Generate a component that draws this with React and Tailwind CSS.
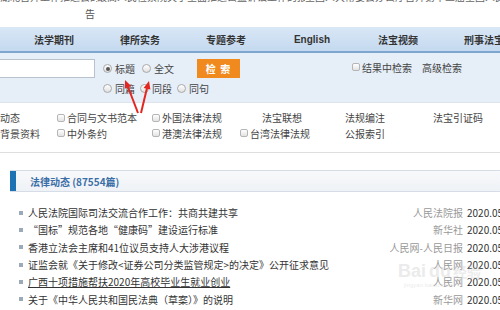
import React from "react";

const CB = () => (
  <span className="inline-block w-[8px] h-[8px] mr-[2px] rounded-[2px] border border-[#b5b5b5] bg-gradient-to-b from-white to-[#e3e3e3] shrink-0" />
);

const Radio = ({ checked }) => (
  <span className="inline-flex items-center justify-center w-[9px] h-[9px] mr-[3px] rounded-full border border-[#a9a9a9] bg-gradient-to-b from-white to-[#e0e0e0] shrink-0">
    {checked && <span className="w-[4px] h-[4px] rounded-full bg-[#555]" />}
  </span>
);

const items = [
  ["人民法院国际司法交流合作工作：共商共建共享", "人民法院报", false],
  ["“国标”规范各地“健康码”建设运行标准", "新华社", false],
  ["香港立法会主席和41位议员支持人大涉港议程", "人民网-人民日报", false],
  ["证监会就《关于修改<证券公司分类监管规定>的决定》公开征求意见", "人民网", false],
  ["广西十项措施帮扶2020年高校毕业生就业创业", "人民网", true],
  ["关于《中华人民共和国民法典（草案）》的说明", "新华网", false],
];

export default function App() {
  return (
    <div className="relative w-[500px] h-[310px] overflow-hidden bg-white text-[#333] font-['Noto_Sans_CJK_SC','Noto_Sans',sans-serif]">
      {/* top strip */}
      <div className="h-[27px] overflow-hidden text-[10px] leading-[13px] text-[#666]">
        <div className="flex -mt-[10px] whitespace-nowrap">
          <span className="w-[97px] shrink-0 overflow-hidden">湖北召开工作推进会的报</span>
          <span className="w-[208px] shrink-0 overflow-hidden">最高人民检察院关于全面推进公益诉讼工作的报告</span>
          <span className="shrink-0">全国人大常委会办公厅召开第十三届全国人民代表大会</span>
        </div>
        <div className="pl-[85px] mt-[4px] text-[#555]">告</div>
      </div>

      {/* nav */}
      <div className="h-[26px] flex items-center pl-[11px] bg-gradient-to-b from-[#d9e7f6] to-[#c4d9ef] border-b-2 border-[#7ea5cd] whitespace-nowrap text-[10px] font-bold text-[#333]">
        {["法学期刊", "律所实务", "专题参考", "English", "法宝视频", "刑事法宝"].map((t) => (
          <div key={t} className={`w-[86px] shrink-0 text-center ${t === "English" ? "font-['Liberation_Sans',sans-serif]" : ""}`}>
            {t}
          </div>
        ))}
      </div>

      {/* search */}
      <div className="h-[50px] bg-[#e6eef8] border-b border-[#dde3ea] flex items-start pt-[6px] text-[10px] text-[#444] whitespace-nowrap">
        <div className="w-[96px] h-[19px] -ml-[1px] bg-white border border-[#b8c2cc] shrink-0" />
        <div className="w-[94px] ml-[8px] shrink-0">
          <div className="h-[19px] flex items-center">
            <Radio checked />
            <span>标题</span>
            <span className="ml-[7px] inline-flex items-center">
              <Radio />
              全文
            </span>
          </div>
          <div className="h-[13px] mt-[4px] flex items-center">
            <Radio />
            <span>同篇</span>
            <span className="ml-[5px] inline-flex items-center">
              <Radio />
              同段
            </span>
            <span className="ml-[5px] inline-flex items-center">
              <Radio />
              同句
            </span>
          </div>
        </div>
        <div className="w-[43px] h-[19px] bg-[#f08a1e] text-white font-bold flex items-center justify-center shrink-0 tracking-[1px]">
          检 索
        </div>
        <div className="ml-auto mr-[38px] h-[16px] flex items-center">
          <CB />
          <span>结果中检索</span>
          <span className="ml-[10px]">高级检索</span>
        </div>
      </div>

      {/* categories */}
      <div className="h-[50px] border-b border-[#dedede] pt-[7px] text-[10px] text-[#444] whitespace-nowrap">
        <div className="flex h-[15px] items-center -ml-[20px]">
          <span className="w-[77px] shrink-0">法律动态</span>
          <span className="w-[95px] shrink-0 flex items-center"><CB />合同与文书范本</span>
          <span className="w-[88px] shrink-0 flex items-center"><CB />外国法律法规</span>
          <span className="w-[105px] shrink-0 pl-[22px]">法宝联想</span>
          <span className="w-[88px] shrink-0">法规编注</span>
          <span className="shrink-0">法宝引证码</span>
        </div>
        <div className="flex h-[14px] items-center -ml-[20px] mt-[1px]">
          <span className="w-[77px] shrink-0 pl-[20px]">背景资料</span>
          <span className="w-[95px] shrink-0 flex items-center"><CB />中外条约</span>
          <span className="w-[88px] shrink-0 flex items-center"><CB />港澳法律法规</span>
          <span className="w-[105px] shrink-0 flex items-center"><CB />台湾法律法规</span>
          <span className="w-[88px] shrink-0">公报索引</span>
        </div>
      </div>

      {/* panel */}
      <div className="ml-[10px] mt-[17px]">
        <div className="h-[22px] flex items-center border-t border-b border-[#d6dde6] bg-gradient-to-b from-[#f8f9fb] to-[#eef2f6]">
          <div className="w-[6px] h-full bg-[#1d72b3]" />
          <span className="ml-[14px] text-[10px] font-semibold text-[#3b6ea6] whitespace-nowrap">法律动态 (87554篇)</span>
        </div>
        <div className="pt-[12px] text-[10px] whitespace-nowrap">
          {items.map(([t, s, u]) => (
            <div key={t} className="h-[17.3px] flex items-center">
              <span className="ml-[9px] w-[4px] h-[4px] bg-[#9aaab8] shrink-0" />
              <span className={`ml-[5px] flex-1 min-w-0 overflow-hidden text-[#333] ${u ? "underline" : ""}`}>{t}</span>
              <span className="shrink-0 text-right text-[#999]">{s}</span>
              <span className="ml-[4px] w-[33px] shrink-0 text-[#333] overflow-hidden">2020.05</span>
            </div>
          ))}
        </div>
      </div>

      {/* watermark */}
      <div className="absolute left-[398px] top-[262px] text-[#cfcfcf] opacity-40 pointer-events-none leading-none whitespace-nowrap">
        <div className="text-[18px] font-bold font-['Liberation_Sans','Noto_Sans_CJK_SC',sans-serif]">Bai<span className="ml-[3px]">du</span><span className="ml-[2px] text-[14px]">经验</span></div>
        <div className="text-[6px] mt-[2px] pl-[6px] font-['Liberation_Sans',sans-serif]">jingyan.baidu.com</div>
      </div>

      {/* red arrows */}
      <svg className="absolute left-0 top-0 pointer-events-none" width="500" height="310">
        <line x1="138" y1="113" x2="128" y2="87" stroke="#e3261f" strokeWidth="2" />
        <polygon points="125,80 131.2,86.1 124.8,88.7" fill="#e3261f" />
        <line x1="141" y1="113" x2="147" y2="88" stroke="#e3261f" strokeWidth="2" />
        <polygon points="149,81 150.4,89.6 143.6,87.9" fill="#e3261f" />
      </svg>
    </div>
  );
}
